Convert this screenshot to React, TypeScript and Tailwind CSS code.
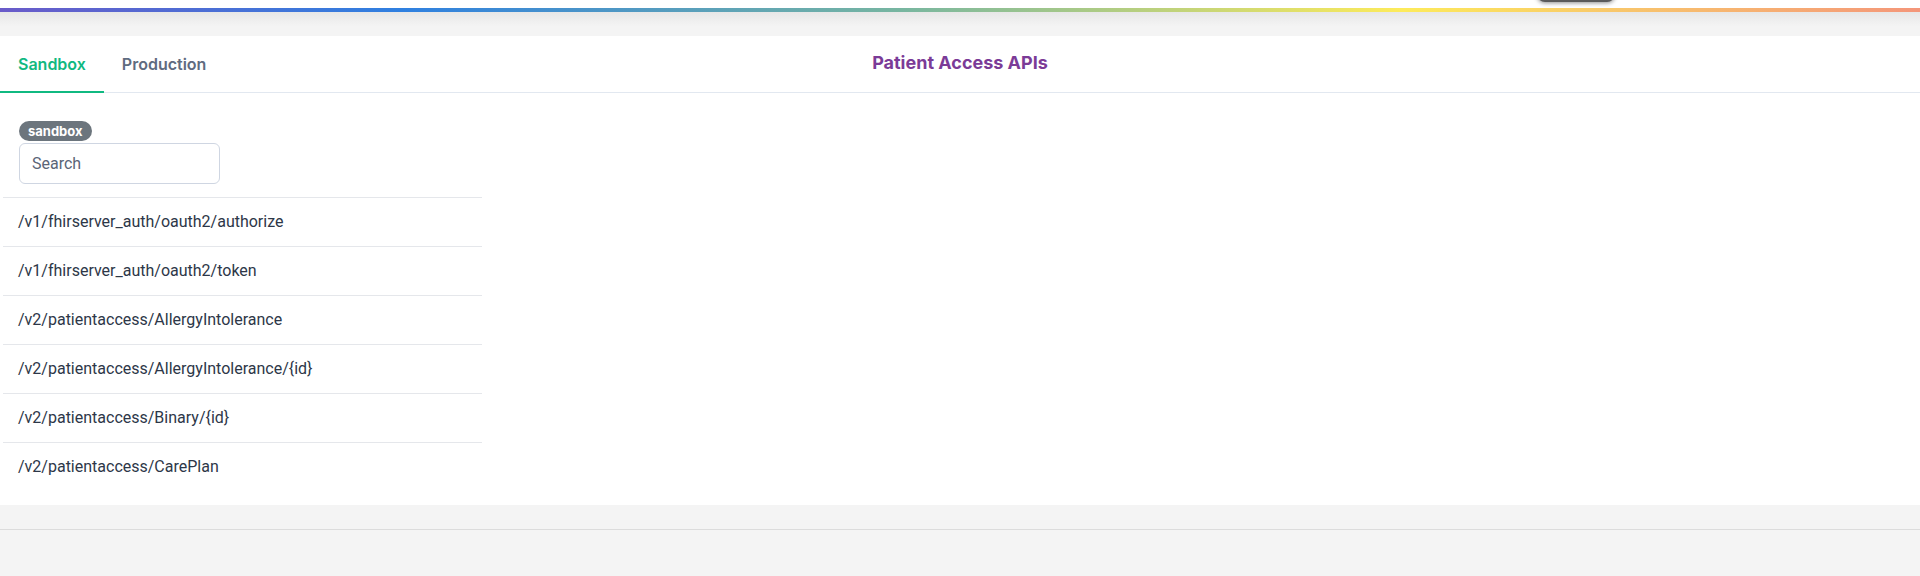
import { useState } from "react";

const endpoints = [
  "/v1/fhirserver_auth/oauth2/authorize",
  "/v1/fhirserver_auth/oauth2/token",
  "/v2/patientaccess/AllergyIntolerance",
  "/v2/patientaccess/AllergyIntolerance/{id}",
  "/v2/patientaccess/Binary/{id}",
  "/v2/patientaccess/CarePlan",
];

const App = () => {
  const [tab, setTab] = useState<"sandbox" | "production">("sandbox");
  const [query, setQuery] = useState<string>("");

  const filtered = endpoints.filter((e) =>
    e.toLowerCase().includes(query.toLowerCase())
  );

  return (
    <div className="relative w-full h-[576px] overflow-hidden bg-[#f4f4f4] font-['Inter',_'Noto_Sans',_sans-serif]">
      {/* Top strip */}
      <div className="h-2 bg-white" />
      <div className="h-1 bg-[linear-gradient(to_right,#6a5bc9_0%,#2f80e0_21%,#78b6a0_47%,#fdeb5b_73%,#f8c46c_85%,#f4967a_100%)]" />
      <div className="h-6 bg-[linear-gradient(to_bottom,#e7e7e7,#f4f4f4_60%)]" />

      {/* Clipped floating button top-right */}
      <div className="absolute top-[-30px] left-[1537px] w-[78px] h-[32px] rounded-lg bg-[#5a5a5a] shadow-[0_1px_4px_rgba(0,0,0,0.45)]" />

      {/* Main panel */}
      <div className="bg-white pb-[14px]">
        {/* Tabs header */}
        <div className="grid grid-cols-[1fr_auto_1fr] items-stretch h-[57px] border-b border-[#e2e8f0]">
          <div className="flex">
            <button
              onClick={() => setTab("sandbox")}
              className={
                tab === "sandbox"
                  ? "px-[18px] -mb-px border-b-2 border-[#10b981] text-[#10b981] font-semibold text-base"
                  : "px-[18px] -mb-px border-b-2 border-transparent text-[#5f6b80] font-semibold text-base"
              }
            >
              Sandbox
            </button>
            <button
              onClick={() => setTab("production")}
              className={
                tab === "production"
                  ? "px-[18px] -mb-px border-b-2 border-[#10b981] text-[#10b981] font-semibold text-base"
                  : "px-[18px] -mb-px border-b-2 border-transparent text-[#5f6b80] font-semibold text-base"
              }
            >
              Production
            </button>
          </div>
          <div className="flex items-center text-lg font-bold text-[#7b3b97] pb-[3px]">
            Patient Access APIs
          </div>
          <div />
        </div>

        {/* Sidebar */}
        <div className="ml-[3px] w-[479px] pt-[28px]">
          <div className="flex flex-col items-start px-4">
            <span className="flex items-center h-5 px-[9px] rounded-full bg-[#6c757d] text-white text-[13px] font-bold leading-none">
              {tab}
            </span>
            <input
              value={query}
              onChange={(e) => setQuery(e.target.value)}
              placeholder="Search"
              className="block mt-[2px] w-[201px] h-[41px] px-3 rounded-md border border-[#cfd6e2] text-base text-[#2d3748] placeholder:text-[#5b6577] outline-none font-['Roboto',_sans-serif]"
            />
          </div>
          <ul className="mt-[13px] font-['Roboto',_sans-serif]">
            {filtered.map((e) => (
              <li
                key={e}
                className="border-t border-[#e5e7eb] py-3 pl-[15px] text-base leading-6 text-[#2d3748]"
              >
                {e}
              </li>
            ))}
          </ul>
        </div>
      </div>

      {/* Footer */}
      <div className="h-6" />
      <div className="border-t border-[#dcdcdc] pt-[42px] text-center text-sm leading-5 text-[#555]">
        Copyright © 2024 Patient Access APIs. All rights reserved.
      </div>
    </div>
  );
};

export default App;
